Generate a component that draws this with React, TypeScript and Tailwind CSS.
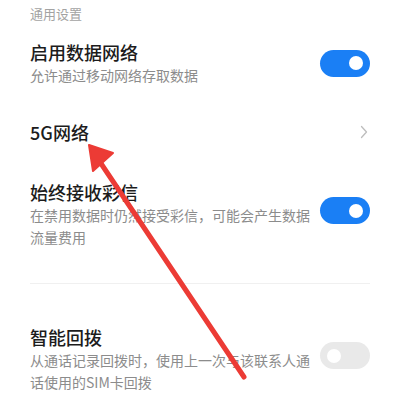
import React from 'react'

const font = { fontFamily: '"Noto Sans CJK SC", "Noto Sans", sans-serif' }

function Toggle({ on, className }: { on: boolean; className?: string }) {
  return (
    <div
      className={`flex h-[27px] w-[50px] shrink-0 items-center rounded-full px-[7px] ${
        on ? 'justify-end bg-[#1a7ff5]' : 'justify-start bg-[#e9e9e9]'
      } ${className ?? ''}`}
    >
      <div className="h-[14px] w-[14px] rounded-full bg-white" />
    </div>
  )
}

function Chevron() {
  return (
    <svg width="8" height="14" viewBox="0 0 8 14" className="mr-[2px]">
      <path d="M1.5 1.5 L6.5 7 L1.5 12.5" fill="none" stroke="#bdbdbd" strokeWidth="1.3" strokeLinecap="round" strokeLinejoin="round" />
    </svg>
  )
}

export default function App() {
  return (
    <div className="relative h-[400px] w-[400px] overflow-hidden bg-white" style={font}>
      <div className="px-[30px] pt-[4px]">
        <div className="text-[13px] leading-[20px] text-[#a3a3a3]">通用设置</div>

        {/* 启用数据网络 */}
        <div className="mt-[16px] flex items-center justify-between">
          <div>
            <div className="text-[18px] font-medium leading-[24px] text-[#1c1c1c]">启用数据网络</div>
            <div className="text-[14px] leading-[22px] text-[#8c8c8c]">允许通过移动网络存取数据</div>
          </div>
          <Toggle on />
        </div>

        {/* 5G网络 */}
        <div className="mt-[34px] flex items-center justify-between">
          <div className="text-[18px] font-medium leading-[24px] text-[#1c1c1c]">5G网络</div>
          <Chevron />
        </div>

        {/* 始终接收彩信 */}
        <div className="mt-[36px] flex items-start justify-between">
          <div className="max-w-[284px]">
            <div className="text-[18px] font-medium leading-[24px] text-[#1c1c1c]">始终接收彩信</div>
            <div className="text-[14px] leading-[22px] text-[#8c8c8c]">
              在禁用数据时仍然接受彩信，可能会产生数据流量费用
            </div>
          </div>
          <Toggle on className="mt-[17px]" />
        </div>

        <div className="mt-[35px] h-px bg-[#f0f0f0]" />

        {/* 智能回拨 */}
        <div className="mt-[41px] flex items-start justify-between">
          <div className="max-w-[284px]">
            <div className="text-[18px] font-medium leading-[24px] text-[#1c1c1c]">智能回拨</div>
            <div className="text-[14px] leading-[22px] text-[#8c8c8c]">
              从通话记录回拨时，使用上一次与该联系人通话使用的SIM卡回拨
            </div>
          </div>
          <Toggle on={false} className="mt-[17px]" />
        </div>
      </div>

      {/* annotation arrow */}
      <svg className="pointer-events-none absolute inset-0" width="400" height="400" viewBox="0 0 400 400">
        <line x1="244" y1="377" x2="100" y2="162" stroke="#ec3b35" strokeWidth="5" strokeLinecap="round" />
        <polygon points="89,145 113,153 93,171" fill="#ec3b35" stroke="#ec3b35" strokeWidth="2" strokeLinejoin="round" />
      </svg>
    </div>
  )
}
